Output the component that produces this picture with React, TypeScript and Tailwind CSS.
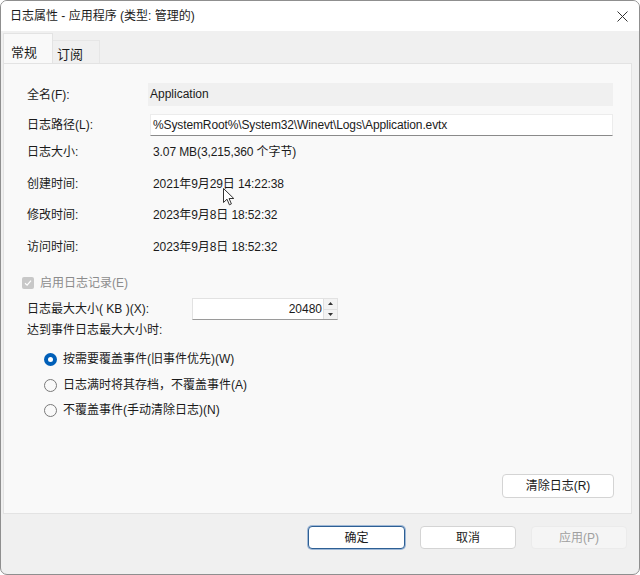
import React from "react";

const font = "font-['Liberation_Sans','Noto_Sans_CJK_SC',sans-serif]";

const InfoRow = ({ label, value, mt }: { label: string; value: string; mt: string }) => (
  <div className={`flex items-center h-[22px] ${mt}`}>
    <div className="w-[126px] shrink-0">{label}</div>
    <div className="tracking-[-0.1px]">{value}</div>
  </div>
);

const Radio = ({ checked, label, mt }: { checked?: boolean; label: string; mt: string }) => (
  <div className={`flex items-center h-[22px] pl-[17px] ${mt}`}>
    {checked ? (
      <span className="w-[13px] h-[13px] rounded-full bg-[#005fb8] flex items-center justify-center">
        <span className="w-[5px] h-[5px] rounded-full bg-white" />
      </span>
    ) : (
      <span className="w-[13px] h-[13px] rounded-full border border-[#7a7a7a] bg-[#f9f9f9]" />
    )}
    <span className="ml-[6px]">{label}</span>
  </div>
);

export default function App() {
  return (
    <div className={`w-[640px] h-[575px] bg-white ${font} text-[12px] text-[#1b1b1b] leading-none`}>
      <div className="relative w-full h-full flex flex-col border border-[#8f8f8f] rounded-[7px] overflow-hidden bg-[#f0f0f0]">
        {/* title bar */}
        <div className="h-[30px] bg-white flex items-center justify-between pl-[9px] pr-[11px] shrink-0">
          <span>日志属性 - 应用程序 (类型: 管理的)</span>
          <svg width="11" height="11" viewBox="0 0 11 11" className="text-[#333]">
            <path d="M0.5 0.5 L10.5 10.5 M10.5 0.5 L0.5 10.5" stroke="currentColor" strokeWidth="1" />
          </svg>
        </div>

        {/* tabs */}
        <div className="h-[32px] flex items-end pl-[2px] shrink-0">
          <div className="h-[30px] w-[50px] bg-[#f9f9f9] border border-b-0 border-[#e3e3e3] flex items-center pl-[7px] pt-[8px] text-[13px]">
            常规
          </div>
          <div className="h-[23px] w-[47px] bg-[#f0f0f0] border border-b-0 border-l-0 border-[#e6e6e6] flex items-center pl-[4px] pt-[4px] text-[13px]">
            订阅
          </div>
        </div>

        {/* panel */}
        <div className="h-[451px] ml-[2px] mr-[7px] bg-[#f9f9f9] border border-[#e3e3e3] flex flex-col pl-[23px] pr-[18px] shrink-0">
          <div className="flex items-center h-[23px] mt-[19px]">
            <div className="w-[121px] shrink-0">全名(F):</div>
            <div className="flex-1 h-full bg-[#f0f0f0] flex items-center pl-[2px] pb-[2px]">Application</div>
          </div>
          <div className="flex items-center h-[22px] mt-[8px]">
            <div className="w-[123px] shrink-0">日志路径(L):</div>
            <div className="flex-1 h-full bg-white border border-[#ececec] border-b-[#8a8a8a] flex items-center pl-[2px] tracking-[-0.12px]">
              %SystemRoot%\System32\Winevt\Logs\Application.evtx
            </div>
          </div>
          <InfoRow label="日志大小:" value="3.07 MB(3,215,360 个字节)" mt="mt-[5px]" />
          <InfoRow label="创建时间:" value="2021年9月29日 14:22:38" mt="mt-[10px]" />
          <InfoRow label="修改时间:" value="2023年9月8日 18:52:32" mt="mt-[9px]" />
          <InfoRow label="访问时间:" value="2023年9月8日 18:52:32" mt="mt-[10px]" />

          <div className="flex items-center h-[22px] mt-[14px] -ml-[5px] text-[#8c8c8c]">
            <span className="w-[12px] h-[12px] rounded-[2px] bg-[#c8c8c8] flex items-center justify-center">
              <svg width="8" height="8" viewBox="0 0 8 8">
                <path d="M1 4.2 L3.1 6.2 L7 1.6" fill="none" stroke="#ffffff" strokeWidth="1.2" />
              </svg>
            </span>
            <span className="ml-[6px]">启用日志记录(E)</span>
          </div>

          <div className="flex items-center h-[22px] mt-[4px]">
            <div className="w-[165px] shrink-0">日志最大大小( KB )(X):</div>
            <div className="w-[146px] h-full bg-white border border-[#e2e2e2] border-b-[#9a9a9a] flex items-center">
              <div className="flex-1 text-right pr-[1px]">20480</div>
              <div className="w-[14px] h-full flex flex-col border-l border-[#e0e0e0]">
                <div className="flex-1 flex items-center justify-center border-b border-[#e0e0e0] bg-[#f3f3f3]">
                  <svg width="5" height="3" viewBox="0 0 5 3">
                    <path d="M2.5 0 L5 3 L0 3 Z" fill="#333" />
                  </svg>
                </div>
                <div className="flex-1 flex items-center justify-center bg-[#f3f3f3]">
                  <svg width="5" height="3" viewBox="0 0 5 3">
                    <path d="M0 0 L5 0 L2.5 3 Z" fill="#333" />
                  </svg>
                </div>
              </div>
            </div>
          </div>

          <div className="flex items-center h-[20px]">达到事件日志最大大小时:</div>

          <Radio checked label="按需要覆盖事件(旧事件优先)(W)" mt="mt-[8px]" />
          <Radio label="日志满时将其存档，不覆盖事件(A)" mt="mt-[4px]" />
          <Radio label="不覆盖事件(手动清除日志)(N)" mt="mt-[3px]" />

          <div className="flex-1" />
          <div className="flex justify-end mb-[15px] -mr-[1px]">
            <button className="w-[112px] h-[24px] bg-white border border-[#d4d4d4] rounded-[4px] text-[12px]">
              清除日志(R)
            </button>
          </div>
        </div>

        {/* footer */}
        <div className="flex justify-end gap-[15px] pr-[12px] pt-[12px]">
          <button className="w-[97px] h-[23px] bg-white border border-[#2d5f94] rounded-[4px] shadow-[0_0_0_1px_#9fb8d6] text-[12px]">
            确定
          </button>
          <button className="w-[96px] h-[23px] bg-white border border-[#d4d4d4] rounded-[4px] text-[12px]">
            取消
          </button>
          <button className="w-[96px] h-[23px] bg-[#f5f5f5] border border-[#ebebeb] rounded-[4px] text-[12px] text-[#a0a0a0]">
            应用(P)
          </button>
        </div>

        {/* mouse pointer */}
        <svg className="absolute left-[222px] top-[187px]" width="12" height="18" viewBox="0 0 12 18">
          <path d="M0.5 0.5 L0.5 14.5 L4 11.2 L6.4 16.8 L8.4 15.9 L6.1 10.5 L10.8 10.5 Z" fill="#ffffff" stroke="#333" strokeWidth="1" />
        </svg>
      </div>
    </div>
  );
}
